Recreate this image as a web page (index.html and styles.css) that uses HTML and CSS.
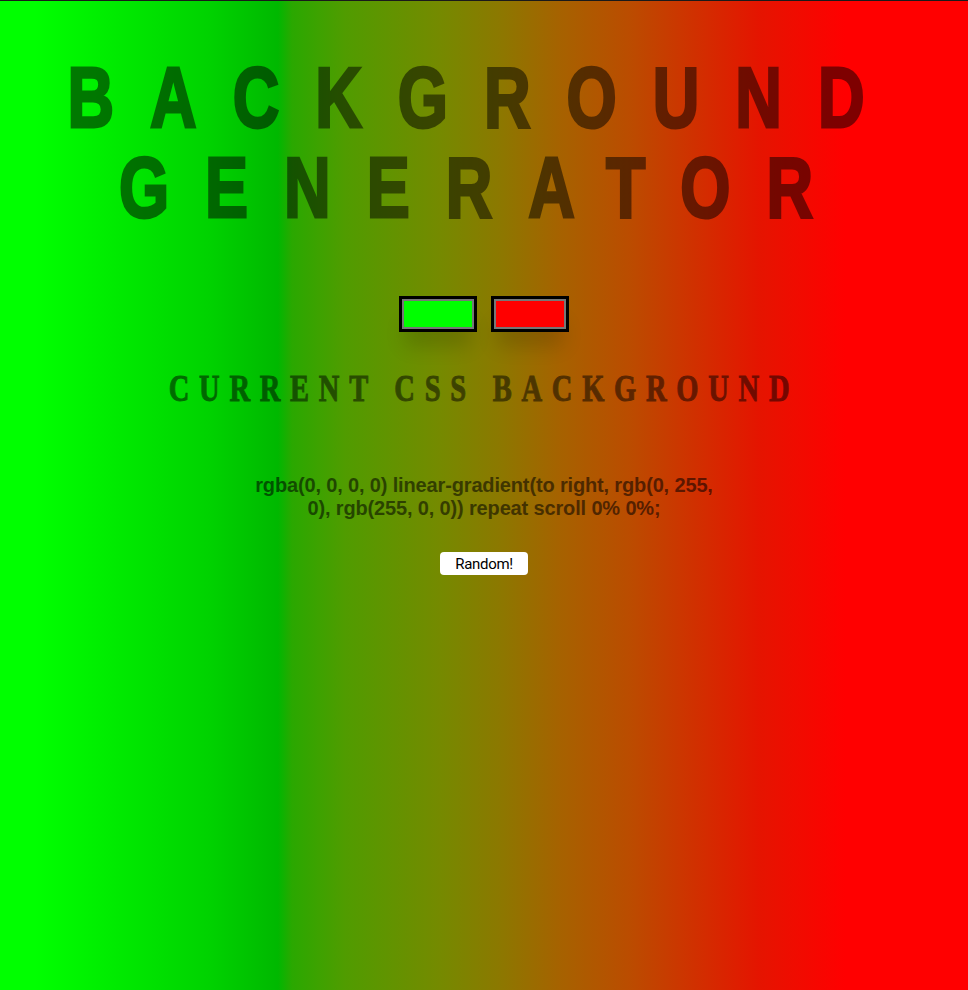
FILE: index.html
```html
<!DOCTYPE html>
<html lang="en">
<head>
<meta charset="utf-8">
<title>Background Generator</title>
<link rel="stylesheet" href="styles.css">
</head>
<body>
<main class="page">
  <h1 class="title"><span>BACKGROUND</span> <span>GENERATOR</span></h1>
  <div class="pickers">
    <input class="picker" type="color" value="#00ff00">
    <input class="picker" type="color" value="#ff0000">
  </div>
  <h3 class="subtitle">Current CSS Background</h3>
  <p class="css-value">rgba(0, 0, 0, 0) linear-gradient(to right, rgb(0, 255, 0), rgb(255, 0, 0)) repeat scroll 0% 0%;</p>
  <button class="random" type="button">Random!</button>
</main>
</body>
</html>
```
FILE: styles.css
```css
html, body {
  margin: 0;
  padding: 0;
}

body {
  min-height: 100vh;
  border-top: 1px solid #1a1a1a;
  box-sizing: border-box;
  background: linear-gradient(to right,
    #00ff00 0px,
    #00ff00 35px,
    #00ec00 110px,
    #00d200 210px,
    #00b800 278px,
    #2aa800 292px,
    #509c00 345px,
    #758a00 440px,
    #8c7800 500px,
    #a66200 560px,
    #bb4c00 630px,
    #d22e00 700px,
    #e51400 760px,
    #ff0000 845px,
    #ff0000 100%);
  font-family: "Liberation Sans", Arial, sans-serif;
}

.page {
  display: flex;
  flex-direction: column;
  align-items: center;
  padding-top: 51px;
}

.title {
  display: flex;
  flex-direction: column;
  align-items: center;
  width: 100%;
  margin: 0;
  font: bold 86px/90px "Liberation Sans", Arial, sans-serif;
  letter-spacing: 48px;
  color: #000;
  -webkit-text-stroke: 3px #000;
  opacity: 0.5;
  transform: scaleX(0.75);
}

.title span {
  display: block;
  height: 90px;
  white-space: nowrap;
}

.pickers {
  display: flex;
  gap: 14px;
  margin-top: 64px;
}

.picker {
  -webkit-appearance: none;
  appearance: none;
  width: 78px;
  height: 36px;
  padding: 0;
  margin: 0;
  border: 3px solid #000;
  background: #000;
  box-sizing: border-box;
  cursor: pointer;
  box-shadow: 0 20px 20px -6px rgba(0, 0, 0, 0.16);
}

.picker::-webkit-color-swatch-wrapper {
  padding: 0;
}

.picker::-webkit-color-swatch {
  border: 2px solid #777;
  border-radius: 0;
}

.subtitle {
  margin: 34px 0 0;
  width: 100%;
  text-align: center;
  font: bold 38px "Liberation Serif", "Times New Roman", serif;
  text-transform: uppercase;
  letter-spacing: 13px;
  color: #000;
  -webkit-text-stroke: 1px #000;
  opacity: 0.5;
  transform: scaleX(0.75);
}

.css-value {
  width: 480px;
  margin: 64px 0 0;
  text-align: center;
  font: bold 20px "Liberation Sans", Arial, sans-serif;
  letter-spacing: -0.15px;
  color: #000;
  opacity: 0.55;
}

.random {
  margin-top: 32px;
  width: 88px;
  height: 23px;
  padding: 0;
  border: none;
  border-radius: 4px;
  background: #fff;
  color: #000;
  font: 15px "Roboto", "Liberation Sans", sans-serif;
  letter-spacing: -0.3px;
}
```
